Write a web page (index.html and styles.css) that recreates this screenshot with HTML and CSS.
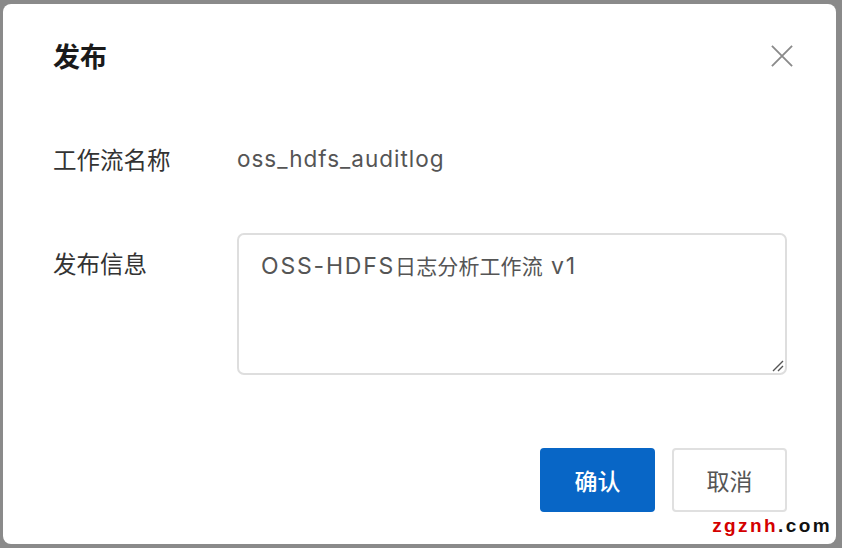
FILE: index.html
```html
<!DOCTYPE html>
<html lang="zh">
<head>
<meta charset="utf-8">
<link rel="stylesheet" href="styles.css">
</head>
<body>
<div class="dialog">
  <div class="header">
    <div class="title">发布</div>
    <svg class="close" width="24" height="24" viewBox="0 0 24 24"><path d="M1 1L23 23M23 1L1 23" stroke="#8a8a8a" stroke-width="2" fill="none"/></svg>
  </div>
  <div class="row">
    <div class="label">工作流名称</div>
    <div class="value">oss_hdfs_auditlog</div>
  </div>
  <div class="row row-top">
    <div class="label label-pad">发布信息</div>
    <div class="input" contenteditable="true" role="textbox" aria-multiline="true"><span class="lat">OSS-HDFS</span>日志分析工作流<span class="lat"> v1</span><svg class="grip" width="14" height="14" viewBox="0 0 14 14"><path d="M13 3L3 13M13 8L8 13" stroke="#555" stroke-width="1.4" fill="none"/></svg></div>
  </div>
  <div class="footer">
    <button class="btn primary">确认</button>
    <button class="btn">取消</button>
  </div>
  <div class="mark"><span class="red">zgznh</span>.com</div>
</div>
</body>
</html>
```
FILE: styles.css
```css
html, body {
  margin: 0;
  padding: 0;
  background: #8a8a8a;
  width: 842px;
  height: 548px;
  overflow: hidden;
}
.dialog {
  position: relative;
  box-sizing: border-box;
  margin: 4px 0 0 3px;
  width: 833px;
  height: 540px;
  background: #fff;
  border-radius: 8px;
  padding: 0 49px 0 50px;
  font-family: Inter, "Noto Sans CJK SC", sans-serif;
  color: #333;
}
.header {
  display: flex;
  align-items: center;
  justify-content: space-between;
  height: 106px;
  margin-right: -6px;
}
.title {
  font-family: "Noto Sans CJK SC", sans-serif;
  font-size: 27px;
  font-weight: 700;
  color: #1a1a1a;
  line-height: 36px;
  margin-top: -2px;
}
.close {
  display: block;
  width: 22px;
  height: 22px;
  margin-top: -2px;
}
.row {
  display: flex;
  align-items: center;
  height: 98px;
}
.row-top {
  align-items: flex-start;
  padding-top: 25px;
  height: auto;
}
.label {
  width: 184px;
  flex: none;
  font-family: "Noto Sans CJK SC", sans-serif;
  font-size: 23.5px;
  color: #333;
  line-height: 32px;
}
.label-pad {
  padding-top: 14px;
}
.value {
  font-size: 22.5px;
  letter-spacing: 1px;
  color: #555;
  line-height: 32px;
}
.input {
  position: relative;
  box-sizing: border-box;
  width: 551px;
  height: 142px;
  border: 2px solid #dedede;
  border-radius: 7px;
  padding: 14px 22px;
  font-family: "Noto Sans CJK SC", sans-serif;
  font-size: 21px;
  letter-spacing: 0.1px;
  line-height: 32px;
  color: #555;
  outline: none;
  margin: 0;
}
.lat {
  font-family: Inter, sans-serif;
  font-size: 23px;
  letter-spacing: 1.8px;
}
.grip {
  position: absolute;
  right: 1px;
  bottom: 1px;
}
.footer {
  display: flex;
  justify-content: flex-end;
  gap: 17px;
  margin-top: 73px;
}
.btn {
  box-sizing: border-box;
  width: 115px;
  height: 64px;
  border: 2px solid #e0e0e0;
  border-radius: 4px;
  background: #fff;
  font-family: "Noto Sans CJK SC", sans-serif;
  font-size: 23px;
  color: #555;
  padding: 0;
}
.btn.primary {
  background: #0866c6;
  border-color: #0866c6;
  color: #fff;
  font-weight: 500;
}
.mark {
  position: absolute;
  right: 4px;
  bottom: 8px;
  font-family: "Liberation Sans", sans-serif;
  font-weight: 700;
  font-size: 19px;
  letter-spacing: 2.4px;
  color: #111;
  line-height: 20px;
}
.red {
  color: #d40000;
}
```
